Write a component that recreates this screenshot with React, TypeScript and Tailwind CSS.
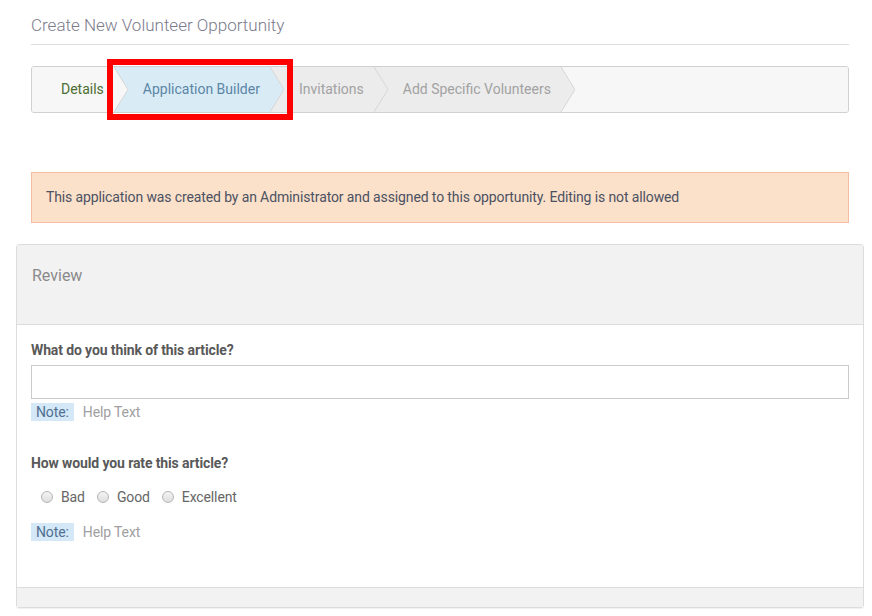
import React from "react";

function Chevron({ prev, next }: { prev: string; next: string }) {
  return (
    <svg width="14" height="45" viewBox="0 0 14 45" className="block shrink-0" preserveAspectRatio="none">
      <rect x="0" y="0" width="14" height="45" fill={next} />
      <polygon points="0,0 14,22.5 0,45" fill={prev} />
      <polyline points="0,0 14,22.5 0,45" fill="none" stroke="#d6d6d6" strokeWidth="1" />
    </svg>
  );
}

function Radio({ label }: { label: string }) {
  return (
    <label className="flex items-center gap-[8px] mr-[12px]">
      <span className="w-[12px] h-[12px] rounded-full border border-[#b5b5b5] bg-[linear-gradient(#f4f4f4,#dedede)] block" />
      <span className="text-[#666]">{label}</span>
    </label>
  );
}

function Note() {
  return (
    <div className="flex items-center h-[18px] text-[14px]">
      <span className="bg-[#d5e8f8] text-[#4f7090] px-[5px] leading-[18px]">Note:</span>
      <span className="ml-[9px] text-[#a0a0a0]">Help Text</span>
    </div>
  );
}

export default function App() {
  const font = { fontFamily: "Roboto, 'Noto Sans', sans-serif" };
  return (
    <div className="relative w-full h-[616px] bg-white overflow-hidden tracking-[-0.12px]" style={font}>
      <div className="pl-[31px] pr-[23px] pt-[13px]">
        <div className="text-[17px] leading-[24px] text-[#7b7b8c] font-light pb-[7px] border-b border-[#dedede] tracking-normal">
          Create New Volunteer Opportunity
        </div>
        <div className="mt-[21px] h-[47px] border border-[#d0d0d0] rounded-[3px] bg-[#f7f7f7] flex items-stretch text-[14px] overflow-hidden tracking-normal">
          <div className="pl-[29px] pr-[10px] flex items-center text-[#4b6e33] bg-[#f7f7f7]">Details</div>
          <Chevron prev="#f7f7f7" next="#d9ebf5" />
          <div className="pl-[15px] pr-[10px] flex items-center text-[#5b86a6] bg-[#d9ebf5]">Application Builder</div>
          <Chevron prev="#d9ebf5" next="#ececec" />
          <div className="pl-[15px] pr-[10px] flex items-center text-[#a2a2a2] bg-[#ececec]">Invitations</div>
          <Chevron prev="#ececec" next="#ececec" />
          <div className="pl-[15px] pr-[10px] flex items-center text-[#a2a2a2] bg-[#ececec]">Add Specific Volunteers</div>
          <Chevron prev="#ececec" next="#f7f7f7" />
          <div className="flex-1 bg-[#f7f7f7]" />
        </div>
        <div className="mt-[59px] h-[51px] border border-[#f6bda4] bg-[#fbe0ca] flex items-center px-[14px] text-[14px] text-[#4b5262]">
          This application was created by an Administrator and assigned to this opportunity. Editing is not allowed
        </div>
      </div>
      <div className="ml-[16px] mr-[8px] mt-[21px] border border-[#dcdcdc] rounded-[3px] shadow-[0_1px_1px_rgba(0,0,0,0.06)]">
        <div className="h-[80px] bg-[#f2f2f2] border-b border-[#dcdcdc] pl-[15px] pt-[20px]">
          <div className="text-[16px] leading-[22px] text-[#8a8a8a] tracking-normal">Review</div>
        </div>
        <div className="px-[14px] pt-[15px] pb-[46px] bg-white">
          <div className="text-[14px] leading-[20px] font-bold text-[#595959]">What do you think of this article?</div>
          <div className="mt-[5px] h-[34px] border border-[#cccccc] bg-white" />
          <div className="mt-[4px]"><Note /></div>
          <div className="mt-[32px] text-[14px] leading-[20px] font-bold text-[#595959]">How would you rate this article?</div>
          <div className="mt-[14px] flex items-center pl-[10px] text-[14px] leading-[20px]">
            <Radio label="Bad" />
            <Radio label="Good" />
            <Radio label="Excellent" />
          </div>
          <div className="mt-[16px]"><Note /></div>
        </div>
        <div className="h-[20px] bg-[#f2f2f2] border-t border-[#dcdcdc]" />
      </div>
      <div className="absolute left-[107px] top-[59px] w-[186px] h-[61px] border-[6px] border-[#ff0000]" />
    </div>
  );
}
